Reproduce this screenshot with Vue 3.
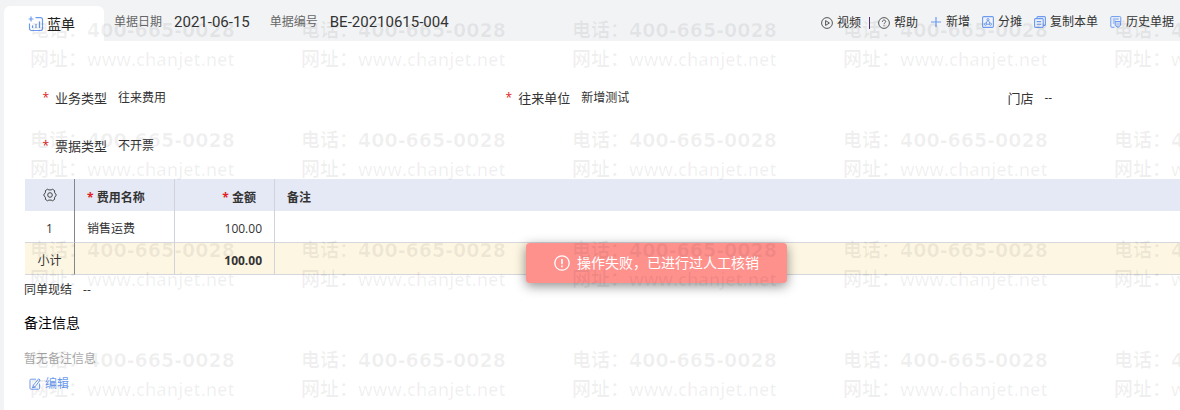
<script setup>
import { ref } from 'vue'

const bill = {
  date: '2021-06-15',
  code: 'BE-20210615-004',
}

const fields = [
  { id: 'busiType', label: '业务类型', value: '往来费用', required: true },
  { id: 'partner', label: '往来单位', value: '新增测试', required: true },
  { id: 'store', label: '门店', value: '--', required: false },
  { id: 'invoiceType', label: '票据类型', value: '不开票', required: true },
]

const rows = ref([
  { name: '销售运费', amount: '100.00', remark: '' },
])

const total = '100.00'

// 5 columns x 4 rows of watermark tiles
const watermarkCount = 20
</script>

<template>
  <div class="page">
    <!-- Header -->
    <header class="header">
      <div class="tab">
        <svg class="tab-icon" viewBox="0 0 16 16" fill="none" stroke="#6b9af0" stroke-width="1.2">
          <path d="M7.5 1.7H12.5A2 2 0 0 1 14.5 3.7V12.5A2 2 0 0 1 12.5 14.5H3.5A2 2 0 0 1 1.5 12.5V7.5" />
          <path d="M3 0.6V5.4M0.6 3H5.4" />
          <path d="M4.5 9.5V12M8 8V12M11.5 5.5V12" />
        </svg>
        <span>蓝单</span>
      </div>

      <dl class="bill-info">
        <div class="bill-item">
          <dt>单据日期</dt>
          <dd>{{ bill.date }}</dd>
        </div>
        <div class="bill-item">
          <dt>单据编号</dt>
          <dd>{{ bill.code }}</dd>
        </div>
      </dl>

      <!-- Toolbar -->
      <nav class="toolbar">
        <div class="help-group">
          <button type="button" class="tool">
            <svg viewBox="0 0 12 12" fill="none" stroke="#444" stroke-width="0.9">
              <circle cx="6" cy="6" r="5.4" />
              <path d="M4.6 3.6L8.4 6L4.6 8.4Z" stroke-linejoin="round" />
            </svg>
            视频
          </button>
          <span class="separator"></span>
          <button type="button" class="tool">
            <svg viewBox="0 0 12 12" fill="none" stroke="#444" stroke-width="0.9">
              <circle cx="6" cy="6" r="5.4" />
              <path d="M4.4 4.8C4.4 2.5 7.7 2.6 7.7 4.6C7.7 5.8 6 5.8 6 7.2M6 8.2V9.2" />
            </svg>
            帮助
          </button>
        </div>
        <button type="button" class="tool">
          <svg viewBox="0 0 12 12" fill="none" stroke="#6b9af0" stroke-width="1.2">
            <path d="M6 1V11M1 6H11" />
          </svg>
          新增
        </button>
        <button type="button" class="tool">
          <svg viewBox="0 0 12 12" fill="none" stroke="#6b9af0">
            <rect x="0.6" y="0.6" width="10.8" height="10.8" rx="1.2" stroke-width="1.1" />
            <circle cx="6" cy="3.7" r="1.1" />
            <circle cx="3.6" cy="8.2" r="1.1" />
            <circle cx="8.4" cy="8.2" r="1.1" />
            <path d="M5.5 4.7L4.1 7.2M6.5 4.7L7.9 7.2M4.7 8.2H7.3" />
          </svg>
          分摊
        </button>
        <button type="button" class="tool">
          <svg viewBox="0 0 12 12" fill="none" stroke="#6b9af0" stroke-width="1.1">
            <path d="M3 2.6V1.6A1 1 0 0 1 4 0.6H10.4A1 1 0 0 1 11.4 1.6V8.4A1 1 0 0 1 10.4 9.4H9.2" />
            <rect x="0.6" y="2.6" width="8.6" height="8.8" rx="1" />
            <path d="M2.6 5.6H7.2M2.6 8.2H7.2" />
          </svg>
          复制本单
        </button>
        <button type="button" class="tool">
          <svg viewBox="0 0 12 12" fill="none" stroke="#6b9af0">
            <path d="M4.5 11.3H1.8A1 1 0 0 1 0.8 10.3V1.6A1 1 0 0 1 1.8 0.6H9.8A1 1 0 0 1 10.8 1.6V6" />
            <path d="M2.8 3H8.8M2.8 5H5.5M2.8 7H4.5" />
            <path d="M5.2 5.5H10.6V9.4L7.9 11.4L5.2 9.4Z" fill="#c9dafa" />
          </svg>
          历史单据
        </button>
      </nav>
    </header>

    <main class="panel">
      <!-- Fields -->
      <dl class="fields">
        <div v-for="field in fields" :key="field.id" class="field">
          <dt>
            <span v-if="field.required" class="star">*</span>
            {{ field.label }}
          </dt>
          <dd>{{ field.value }}</dd>
        </div>
      </dl>

      <!-- Detail table -->
      <table class="detail">
        <thead>
          <tr>
            <th class="col-index">
              <button type="button" class="gear" aria-label="列设置">
                <svg viewBox="0 0 14 14" fill="none" stroke="#444" stroke-linejoin="round">
                  <path d="M4.6 1.2L5.8 1.9H8.2L9.4 1.2L11.6 2.6L11.5 4.2L12.6 6L13.4 7L12.6 8L11.5 9.8L11.6 11.4L9.4 12.8L8.2 12.1H5.8L4.6 12.8L2.4 11.4L2.5 9.8L1.4 8L0.6 7L1.4 6L2.5 4.2L2.4 2.6Z" />
                  <circle cx="7" cy="7" r="2.3" />
                </svg>
              </button>
            </th>
            <th class="col-name"><span class="star">*</span> 费用名称</th>
            <th class="col-amount"><span class="star">*</span> 金额</th>
            <th>备注</th>
          </tr>
        </thead>
        <tbody>
          <tr v-for="(row, index) in rows" :key="row.name">
            <td class="col-index">{{ index + 1 }}</td>
            <td class="col-name">{{ row.name }}</td>
            <td class="col-amount">{{ row.amount }}</td>
            <td>{{ row.remark }}</td>
          </tr>
        </tbody>
        <tfoot>
          <tr>
            <td class="col-index">小计</td>
            <td class="col-name"></td>
            <td class="col-amount">{{ total }}</td>
            <td></td>
          </tr>
        </tfoot>
      </table>

      <!-- Settlement + remarks -->
      <section class="remarks">
        <p class="settle"><span>同单现结</span><span>--</span></p>
        <h2 class="remarks-title">备注信息</h2>
        <p class="remarks-empty">暂无备注信息</p>
        <button type="button" class="edit">
          <svg viewBox="0 0 12 12" fill="none" stroke="#6b9af0">
            <path d="M7 1.2H2A1 1 0 0 0 1 2.2V10.2A1 1 0 0 0 2 11.2H9.6A1 1 0 0 0 10.6 10.2V5.5" />
            <path d="M9.6 0.8L11.2 2L6.2 8.6L4 9.4L4.4 7.2ZM3 9.4H6.5" />
          </svg>
          编辑
        </button>
      </section>
    </main>

    <!-- Error toast -->
    <div class="toast" role="alert">
      <svg viewBox="0 0 16 16" fill="none" stroke="#fff" stroke-width="1.3">
        <circle cx="8" cy="8" r="7.2" />
        <path d="M8 4V9.2M8 10.6V12.2" stroke-width="1.6" />
      </svg>
      操作失败，已进行过人工核销
    </div>

    <!-- Watermark -->
    <div class="watermark" aria-hidden="true">
      <div v-for="n in watermarkCount" :key="n" class="mark">
        <div class="mark-line">电话：<span class="mark-phone">400-665-0028</span></div>
        <div class="mark-line">网址：<span class="mark-site">www.chanjet.net</span></div>
      </div>
    </div>
  </div>
</template>

<style>
body {
  background: #f2f3f5;
}
</style>

<style scoped>
.page {
  position: relative;
  display: flex;
  flex-direction: column;
  min-height: 100vh;
  overflow: hidden;
  background: #f2f3f5;
  font-family: 'Open Sans', 'Noto Sans CJK SC', sans-serif;
  font-size: 12px;
  line-height: 16px;
  color: #333;
}

dl,
dd,
p,
h2 {
  margin: 0;
}

button {
  padding: 0;
  border: none;
  background: transparent;
  font: inherit;
  color: inherit;
  cursor: pointer;
}

svg {
  flex-shrink: 0;
}

/* Header */
.header {
  display: flex;
  align-items: center;
  height: 41px;
  padding: 0 6px 0 4px;
}

.tab {
  display: flex;
  align-items: center;
  align-self: flex-end;
  gap: 3px;
  width: 100px;
  height: 35px;
  box-sizing: border-box;
  padding-left: 24px;
  background: #fff;
  border-radius: 6px 6px 0 0;
  font-size: 14px;
  color: #222;
}

.tab-icon {
  width: 16px;
  height: 16px;
}

.bill-info {
  display: flex;
  gap: 20px;
  margin-left: 10px;
  padding-top: 2px;
}

.bill-item {
  display: flex;
  align-items: center;
  gap: 12px;
}

.bill-item dt {
  color: #666;
}

.bill-item dd {
  font-family: Roboto, 'Noto Sans CJK SC', sans-serif;
  font-size: 15px;
}

/* Toolbar */
.toolbar {
  display: flex;
  align-items: center;
  gap: 12px;
  margin-left: auto;
  padding-top: 2px;
}

.help-group {
  display: flex;
  align-items: center;
  gap: 8px;
  padding-top: 3px;
}

.separator {
  width: 1px;
  height: 12px;
  background: #5b2d7a;
}

.tool {
  display: flex;
  align-items: center;
  gap: 4px;
}

.tool svg {
  width: 12px;
  height: 12px;
}

/* Panel */
.panel {
  flex: 1;
  margin-left: 4px;
  background: #fff;
}

.fields {
  display: grid;
  grid-template-columns: 11fr 11fr 5fr;
  padding: 33px 0 9px 39px;
}

.field {
  display: flex;
  align-items: center;
  height: 48px;
  gap: 11px;
}

.field dt {
  display: flex;
  justify-content: flex-end;
  gap: 6px;
  width: 64px;
  font-size: 13px;
  white-space: nowrap;
}

.star {
  color: #e02020;
}

.field .star {
  font-size: 12px;
}

/* Detail table */
.detail {
  width: calc(100% - 21px);
  margin-left: 21px;
  border-collapse: separate;
  border-spacing: 0;
  table-layout: fixed;
}

.detail th,
.detail td {
  height: 32px;
  box-sizing: border-box;
  padding: 4px 12px 0;
  text-align: left;
}

.detail th {
  padding-top: 6px;
  background: #e5e9f5;
}

.detail td {
  border-bottom: 1px solid #d5d7dc;
}

.detail .col-index {
  width: 50px;
  padding-left: 0;
  padding-right: 0;
  text-align: center;
  border-right: 1px solid #85868b;
}

.detail th.col-index {
  padding-top: 0;
}

.detail .col-name {
  width: 100px;
  border-right: 1px solid #d0d3da;
}

.detail .col-amount {
  width: 100px;
  text-align: right;
  border-right: 1px solid #d0d3da;
}

.detail th.col-amount {
  padding-right: 18px;
}

.detail tfoot td {
  background: #fdf6e3;
}

.detail tfoot .col-amount {
  font-weight: 700;
}

.gear {
  display: block;
  width: 14px;
  height: 14px;
  margin: 0 auto;
}

.gear svg {
  display: block;
}

/* Settlement + remarks */
.remarks {
  padding: 7px 20px 16px;
}

.settle {
  display: flex;
  gap: 11px;
}

.remarks-title {
  margin-top: 15px;
  font-size: 14px;
  font-weight: 400;
  line-height: 20px;
  color: #000;
}

.remarks-empty {
  margin-top: 18px;
  color: #aaa;
}

.edit {
  display: flex;
  align-items: center;
  gap: 4px;
  margin: 9px 0 0 5px;
  color: #6b9af0;
}

.edit svg {
  width: 12px;
  height: 12px;
}

/* Toast */
.toast {
  position: absolute;
  top: 243px;
  left: 526px;
  display: flex;
  align-items: center;
  gap: 7px;
  height: 40px;
  padding: 0 28px;
  border-radius: 4px;
  background: #ff918d;
  box-shadow: 0 3px 12px rgba(0, 0, 0, 0.45);
  font-size: 14px;
  color: #fff;
}

.toast svg {
  width: 16px;
  height: 16px;
}

/* Watermark */
.watermark {
  position: absolute;
  top: 16px;
  left: 30px;
  display: grid;
  grid-template-columns: repeat(5, 271px);
  grid-auto-rows: 110px;
  color: rgba(0, 0, 0, 0.06);
  font-size: 19px;
  font-weight: 700;
  pointer-events: none;
}

.mark-line {
  height: 29px;
  line-height: 29px;
  white-space: nowrap;
}

.mark-phone {
  font-family: 'DejaVu Sans', sans-serif;
}

.mark-site {
  font-size: 18px;
  font-weight: 600;
}
</style>
